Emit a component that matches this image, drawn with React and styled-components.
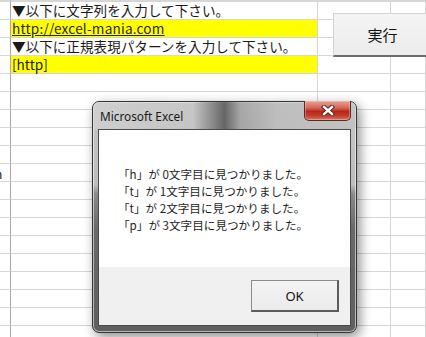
import React from "react";
import styled, { createGlobalStyle } from "styled-components";

const Global = createGlobalStyle`
  html, body { margin: 0; padding: 0; background: #ffffff; overflow: hidden; }
  body { width: 426px; height: 337px; font-family: "Noto Sans CJK JP", "Noto Sans", sans-serif; }
`;

const Page = styled.div`
  position: relative;
  width: 426px;
  height: 337px;
  overflow: hidden;
  background: #ffffff;
`;

const Sheet = styled.div`
  display: flex;
  flex-direction: column;
`;

const TopEdge = styled.div`
  height: 2px;
  box-sizing: border-box;
  border-bottom: 1px solid #d6d6d6;
  display: grid;
  grid-template-columns: 11px 307px 73px 1fr;
`;

const Row = styled.div`
  display: grid;
  grid-template-columns: 11px 307px 73px 1fr;
  height: 18px;
`;

const Cell = styled.div`
  box-sizing: border-box;
  border-right: 1px solid ${(p) => (p.$strong ? "#a8a8a8" : "#d6d6d6")};
  border-bottom: 1px solid #d6d6d6;
  background: ${(p) => p.$fill || "transparent"};
  display: flex;
  align-items: flex-end;
  white-space: nowrap;
  overflow: ${(p) => (p.$clip ? "hidden" : "visible")};
  min-width: 0;
`;

const SheetText = styled.span`
  font-family: "Noto Sans CJK JP", sans-serif;
  font-size: 13.6px;
  line-height: 17px;
  color: #1a1a1a;
  padding-left: 1px;
`;

const LinkText = styled.span`
  font-family: "Noto Sans CJK JP", sans-serif;
  font-size: 13.6px;
  line-height: 17px;
  color: #2a2a1a;
  text-decoration: underline;
  text-underline-offset: 1px;
  padding-left: 1px;
  letter-spacing: 0.2px;
`;

const EdgeGlyph = styled.span`
  font-family: "Noto Sans CJK JP", sans-serif;
  font-size: 12px;
  line-height: 15px;
  margin-left: -5px;
  color: #111;
`;

const RunButton = styled.button`
  position: absolute;
  left: 333px;
  top: 13px;
  width: 100px;
  height: 44px;
  box-sizing: border-box;
  margin: 0;
  padding: 0;
  background: linear-gradient(#f4f4f4, #ececec);
  border: 1px solid #d2d2d2;
  border-bottom: 2px solid #6c6c6c;
  border-right: 2px solid #6c6c6c;
  font-family: "Noto Sans CJK JP", sans-serif;
  font-size: 15px;
  color: #111;
  text-align: center;
`;

const Dialog = styled.div`
  position: absolute;
  left: 92px;
  top: 101px;
  width: 265px;
  height: 232px;
  box-sizing: border-box;
  border: 1px solid #353535;
  border-radius: 7px;
  padding: 0 5px 6px 5px;
  display: flex;
  flex-direction: column;
  background:
    linear-gradient(180deg, #c6c6c6 0%, #bdbdbd 36%, #8a8a8a 40%, #6a6a6a 55%, #5f5f5f 100%);
  box-shadow: inset 0 0 0 1px rgba(255, 255, 255, 0.55), 3px 4px 12px rgba(0, 0, 0, 0.45);
`;

const TitleBar = styled.div`
  position: relative;
  height: 27px;
  flex: none;
  display: flex;
  align-items: center;
  margin: 0 -5px;
  padding: 0 0 0 7px;
  border-radius: 6px 6px 0 0;
  background: linear-gradient(
    90deg,
    rgba(215, 215, 215, 0.55) 0%,
    rgba(200, 200, 200, 0.25) 38%,
    rgba(70, 70, 70, 0.75) 50%,
    rgba(120, 120, 120, 0.4) 56%,
    rgba(175, 175, 175, 0.3) 70%,
    rgba(190, 190, 190, 0.3) 100%
  );
`;

const TitleText = styled.span`
  font-family: "Noto Sans", sans-serif;
  font-size: 11.8px;
  color: #1a1a1a;
  padding-top: 1px;
`;

const CloseButton = styled.div`
  position: absolute;
  right: 5px;
  top: -1px;
  width: 47px;
  height: 20px;
  box-sizing: border-box;
  border: 1px solid #5a2a24;
  border-top: none;
  border-radius: 0 0 5px 5px;
  background: linear-gradient(180deg, #e6a196 0%, #d46a5c 35%, #b9271b 55%, #c4402f 80%, #dc7a63 100%);
  box-shadow: inset 0 0 0 1px rgba(255, 220, 210, 0.35);
  display: flex;
  align-items: center;
  justify-content: center;
`;

const Content = styled.div`
  flex: 1;
  display: flex;
  flex-direction: column;
  border: 1px solid #4a4a4a;
  min-height: 0;
`;

const Message = styled.div`
  height: 137px;
  box-sizing: border-box;
  background: #ffffff;
  padding: 36px 0 0 19px;
  display: flex;
  flex-direction: column;
`;

const MessageLine = styled.div`
  font-family: "Noto Sans CJK JP", sans-serif;
  font-size: 11.6px;
  line-height: 17px;
  color: #1e1e1e;
  white-space: nowrap;
`;

const ButtonBar = styled.div`
  flex: 1;
  background: #f0f0f0;
  display: flex;
  justify-content: flex-end;
  align-items: flex-start;
  padding: 13px 11px 0 0;
`;

const OkButton = styled.button`
  width: 88px;
  height: 32px;
  box-sizing: border-box;
  margin: 0;
  padding: 0;
  background: linear-gradient(#f3f3f3, #ebebeb);
  border: 1px solid #8a8a8a;
  border-right: 2px solid #5c5c5c;
  border-bottom: 2px solid #5c5c5c;
  font-family: "Noto Sans", sans-serif;
  font-size: 13px;
  color: #111;
`;

const rowsTotal = 19;

const sheetRows = [
  { main: <SheetText>▼以下に文字列を入力して下さい。</SheetText> },
  { fill: "#ffff00", main: <LinkText>http://excel-mania.com</LinkText> },
  { main: <SheetText>▼以下に正規表現パターンを入力して下さい。</SheetText> },
  { fill: "#ffff00", main: <SheetText>[http]</SheetText> },
];

const messages = [
  "「h」が 0文字目に見つかりました。",
  "「t」が 1文字目に見つかりました。",
  "「t」が 2文字目に見つかりました。",
  "「p」が 3文字目に見つかりました。",
];

export default function App() {
  const rows = Array.from({ length: rowsTotal }, (_, i) => sheetRows[i] || {});
  return (
    <Page>
      <Global />
      <Sheet>
        <TopEdge>
          <Cell $strong />
          <Cell />
          <Cell />
          <Cell />
        </TopEdge>
        {rows.map((r, i) => (
          <Row key={i}>
            <Cell $strong $clip>
              {i === 9 ? <EdgeGlyph>n</EdgeGlyph> : null}
            </Cell>
            <Cell $fill={r.fill}>{r.main}</Cell>
            <Cell />
            <Cell />
          </Row>
        ))}
      </Sheet>

      <RunButton>実行</RunButton>

      <Dialog>
        <TitleBar>
          <TitleText>Microsoft Excel</TitleText>
          <CloseButton>
            <svg width="14" height="11" viewBox="0 0 14 11">
              <path d="M3 2 L11 9 M11 2 L3 9" stroke="#4a1a14" strokeWidth="4.2" strokeLinecap="square" />
              <path d="M3 2 L11 9 M11 2 L3 9" stroke="#ffffff" strokeWidth="2.4" strokeLinecap="square" />
            </svg>
          </CloseButton>
        </TitleBar>
        <Content>
          <Message>
            {messages.map((m) => (
              <MessageLine key={m}>{m}</MessageLine>
            ))}
          </Message>
          <ButtonBar>
            <OkButton>OK</OkButton>
          </ButtonBar>
        </Content>
      </Dialog>
    </Page>
  );
}
